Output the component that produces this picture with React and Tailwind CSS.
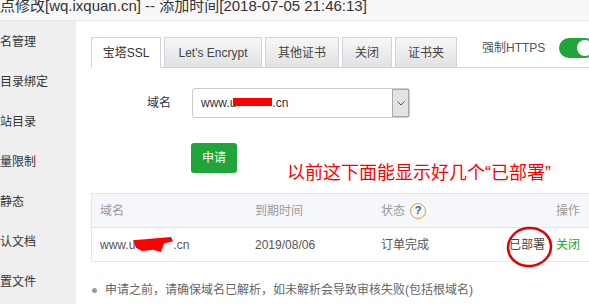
const menu = ["名管理", "目录绑定", "站目录", "量限制", "静态", "认文档", "置文件"];

const tabs = [
  { label: "宝塔SSL", w: "w-[70px]", active: true },
  { label: "Let's Encrypt", w: "w-[98px]" },
  { label: "其他证书", w: "w-[74px]" },
  { label: "关闭", w: "w-[50px]" },
  { label: "证书夹", w: "w-[62px]" },
];

// red brush stroke that hides part of the domain
const Scribble = ({ className }) => (
  <svg viewBox="0 0 40 14" className={className} preserveAspectRatio="none">
    <path d="M0 3 L38 0 L40 4 L31 6 L28 14 L20 12 L9 13 L3 10 Z" fill="#ff0000" />
  </svg>
);

export default function App() {
  return (
    <div className="relative h-[304px] w-[589px] overflow-hidden bg-white font-['Liberation_Sans','Noto_Sans_CJK_SC',sans-serif] text-[12px] text-[#333]">
      {/* layer title */}
      <div className="h-[21px] overflow-hidden border-b border-[#e6e6e6] bg-[#f8f8f8]">
        <div className="-mt-[2px] whitespace-nowrap text-[15px] leading-[15px] text-[#333]">
          点修改[wq.ixquan.cn] -- 添加时间[2018-07-05 21:46:13]
        </div>
      </div>

      <div className="flex h-[283px]">
        <aside className="w-[76px] shrink-0 overflow-hidden bg-[#efefef] pt-px">
          {menu.map((m) => (
            <div key={m} className="flex h-[40px] items-center whitespace-nowrap leading-[14px] text-[#333]">
              {m}
            </div>
          ))}
        </aside>

        <main className="min-w-0 flex-1 overflow-hidden pl-[15px] pt-[16px]">
          {/* tabs */}
          <div className="flex items-end border-b border-[#d3d3df]">
            {tabs.map((t) => (
              <div
                key={t.label}
                className={`-mb-px mr-[3px] flex h-[31px] shrink-0 items-center justify-center border leading-[14px] ${t.w} ${
                  t.active
                    ? "border-[#d3d3df] border-b-white bg-white text-[#333]"
                    : "border-[#d3d3df] bg-gradient-to-b from-[#f7f7f7] to-[#e2e2e2] text-[#444]"
                }`}
              >
                {t.label}
              </div>
            ))}
            <div className="mb-[9px] ml-[22px] flex shrink-0 items-center self-end">
              <span className="leading-[14px] text-[#555]">强制HTTPS</span>
              <div className="ml-[14px] flex h-[20px] w-[36px] shrink-0 items-center justify-end rounded-full bg-[#20a53a] pr-[2px]">
                <div className="h-[16px] w-[16px] rounded-full bg-white" />
              </div>
            </div>
          </div>

          {/* domain select */}
          <div className="mt-[20px] flex items-center">
            <span className="w-[80px] text-right leading-[14px] text-[#333]">域名</span>
            <div className="ml-[21px] flex h-[30px] w-[218px] items-stretch rounded-[3px] border border-[#ccc]">
              <div className="flex flex-1 items-center pl-[8px] leading-[14px] text-[#333]">
                www.u
                <span className="ml-[-3px] mt-[-2px] inline-block h-[8px] w-[39px] bg-[#ff0000]" />
                .cn
              </div>
              <div className="flex w-[17px] items-center justify-center border border-[#a9a9a9] bg-[#e3e3e3]">
                <svg width="8" height="5" viewBox="0 0 8 5">
                  <path d="M0.5 0.5 L4 4 L7.5 0.5" fill="none" stroke="#555" strokeWidth="1" />
                </svg>
              </div>
            </div>
          </div>

          <div className="ml-[100px] mt-[25px] flex h-[30px] w-[46px] items-center justify-center rounded-[3px] bg-[#20a53a] leading-[14px] text-white">
            申请
          </div>

          {/* certificate table */}
          <div className="mt-[20px] w-[500px] border border-[#e5e5e5]">
            <div className="flex h-[34px] items-center border-b border-[#e5e5e5] bg-[#f6f7fa] leading-[14px] text-[#999]">
              <span className="w-[163px] pl-[8px]">域名</span>
              <span className="w-[126px]">到期时间</span>
              <span className="flex flex-1 items-center">
                状态
                <span className="ml-[5px] flex h-[16px] w-[16px] items-center justify-center rounded-full border-[1.5px] border-[#f0a030] text-[11px] font-bold leading-[11px] text-[#2d5d8c]">
                  ?
                </span>
              </span>
              <span className="pr-[10px] text-right">操作</span>
            </div>
            <div className="flex h-[33px] items-center leading-[14px] text-[#555]">
              <span className="flex w-[163px] items-center pl-[8px]">
                www.u
                <Scribble className="-ml-[2px] h-[15px] w-[40px]" />
                .cn
              </span>
              <span className="w-[126px]">2019/08/06</span>
              <span className="flex-1">订单完成</span>
              <span className="flex items-center pr-[10px]">
                <span className="text-[#444]">已部署</span>
                <span className="mx-[5px] h-[11px] w-px bg-[#bbb]" />
                <span className="text-[#20a53a]">关闭</span>
              </span>
            </div>
          </div>

          <div className="mt-[18px] flex h-[20px] items-center leading-[14px] text-[#666]">
            <span className="ml-px mr-[8px] h-[5px] w-[5px] rounded-full bg-[#999]" />
            申请之前，请确保域名已解析，如未解析会导致审核失败(包括根域名)
          </div>
        </main>
      </div>

      {/* red annotation drawn over the screenshot */}
      <div className="absolute left-[287px] top-[164px] whitespace-nowrap text-[18px] leading-[18px] text-[#ff0000]">
        以前这下面能显示好几个“已部署”
      </div>
      <svg className="absolute left-[505px] top-[226px]" width="50" height="43" viewBox="0 0 50 43">
        <ellipse cx="24.5" cy="21" rx="21.5" ry="19" fill="none" stroke="#e00000" strokeWidth="2.5" transform="rotate(-6 24.5 21)" />
      </svg>
    </div>
  );
}
